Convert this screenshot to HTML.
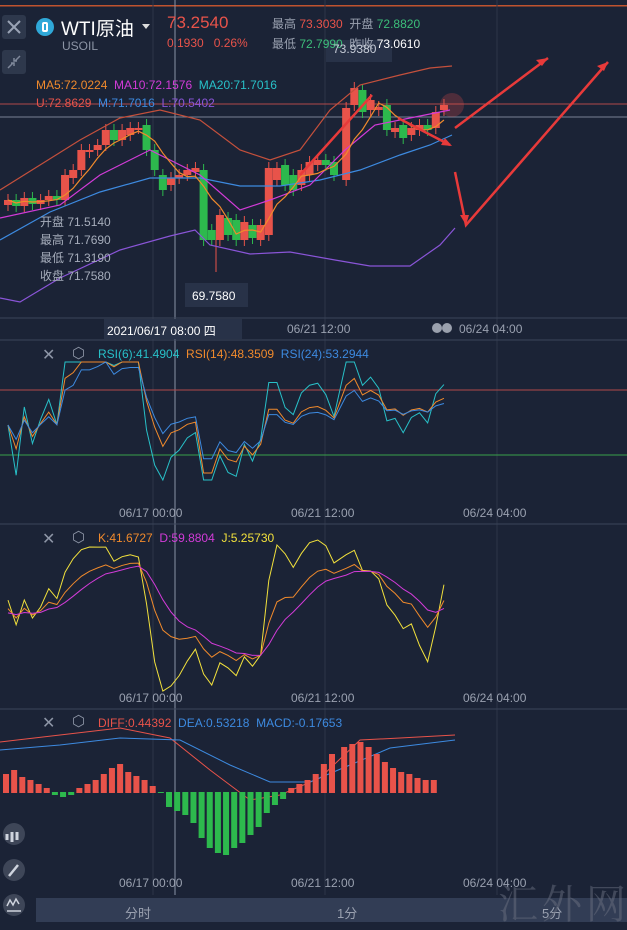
<!DOCTYPE html>
<html><head><meta charset="utf-8"><style>
body{margin:0;width:627px;height:927px;background:#1b2336;overflow:hidden;font-family:"Liberation Sans","Noto Sans CJK SC",sans-serif;position:relative}
.t{position:absolute;white-space:nowrap;font-size:13px}
svg{position:absolute;left:0;top:0}
</style></head><body>
<svg id="s" width="627" height="927" xmlns="http://www.w3.org/2000/svg">
<rect x="0" y="5" width="627" height="1.5" fill="#c0532f"/>
<g stroke="#2c3548" stroke-width="1">
<line x1="153" y1="0" x2="153" y2="895"/><line x1="325" y1="0" x2="325" y2="895"/><line x1="497" y1="0" x2="497" y2="895"/>
</g>
<line x1="175" y1="0" x2="175" y2="895" stroke="#8a93a6" stroke-width="1"/>
<g stroke="#3b4559"><line x1="0" y1="340" x2="627" y2="340"/><line x1="0" y1="524" x2="627" y2="524"/><line x1="0" y1="709" x2="627" y2="709"/><line x1="0" y1="318" x2="627" y2="318"/></g>
<line x1="0" y1="104" x2="627" y2="104" stroke="#b04a4a"/>
<line x1="0" y1="117" x2="627" y2="117" stroke="#7a8294"/>
<line x1="0" y1="390" x2="627" y2="390" stroke="#b04a4a"/>
<line x1="0" y1="455" x2="627" y2="455" stroke="#3aa04a"/>
<rect x="0" y="895" width="627" height="32" fill="#1b2336"/>
<rect x="36" y="898" width="591" height="24" fill="#323d55"/>
<rect x="2" y="15" width="24" height="24" rx="3" fill="#2e384c"/>
<path d="M8 21l12 12M20 21l-12 12" stroke="#9aa3b5" stroke-width="2"/>
<rect x="2" y="50" width="24" height="24" rx="3" fill="#2e384c"/>
<path d="M8 68l5-5M20 56l-5 5M11 63h3v3M17 61h-3v-3" stroke="#7f889a" stroke-width="1.5" fill="none"/>
<circle cx="45" cy="27" r="9" fill="#2fa8d8"/><rect x="42" y="22" width="6" height="10" rx="2" fill="#fff"/><rect x="44" y="24" width="2" height="6" fill="#2fa8d8"/>
<path d="M142 24h8l-4 5z" fill="#ddd"/>
<circle cx="452" cy="105" r="12" fill="#e84a4a" opacity="0.25"/>
<g fill="#3e4658"><circle cx="14" cy="834" r="11"/><circle cx="14" cy="870" r="11"/><circle cx="14" cy="905" r="11"/></g>
<path d="M7 840v-6M12 842v-10M17 840v-8" stroke="#cfd4de" stroke-width="3"/>
<path d="M9 876l9-11" stroke="#cfd4de" stroke-width="2.5"/>
<path d="M7 906l3-6 3 5 3-6 3 5M7 911h14" stroke="#cfd4de" stroke-width="1.5" fill="none"/>
<circle cx="437" cy="328" r="5" fill="#9aa0ad"/><circle cx="447" cy="328" r="5" fill="#9aa0ad"/>
<rect x="185" y="283" width="63" height="24" fill="#283248"/>
<rect x="104" y="319" width="138" height="20" fill="#283248"/>
<rect x="326" y="40" width="66" height="22" fill="#283248"/>
</svg>
<div class="t" style="left:61px;top:14px;font-size:19px;color:#fff">WTI原油</div>
<div class="t" style="left:62px;top:39px;font-size:12px;color:#8d95a6">USOIL</div>
<div class="t" style="left:167px;top:13px;font-size:17px;color:#e8534a">73.2540</div>
<div class="t" style="left:167px;top:36px;font-size:12px;color:#e8534a">0.1930&nbsp;&nbsp;&nbsp;0.26%</div>
<div class="t" style="left:272px;top:15px;font-size:12px;color:#9aa1b0">最高 <span style="color:#e8534a">73.3030</span>&nbsp;&nbsp;开盘 <span style="color:#3cbf7a">72.8820</span></div>
<div class="t" style="left:272px;top:35px;font-size:12px;color:#9aa1b0">最低 <span style="color:#3cbf7a">72.7990</span>&nbsp;&nbsp;昨收 <span style="color:#fff">73.0610</span></div>
<div class="t" style="left:333px;top:42px;font-size:12px;color:#c6ccd7">73.9380</div>
<div class="t" style="left:36px;top:78px;font-size:12px;color:#f08a2c">MA5:72.0224 <span style="color:#d23bd8">&nbsp;MA10:72.1576</span> <span style="color:#28c0c8">&nbsp;MA20:71.7016</span></div>
<div class="t" style="left:36px;top:96px;font-size:12px;color:#e8534a">U:72.8629 <span style="color:#3d8ae0">&nbsp;M:71.7016</span> <span style="color:#8a55d8">&nbsp;L:70.5402</span></div>
<div class="t" style="left:40px;top:213px;font-size:12px;color:#a6adbb;line-height:18px">开盘 71.5140<br>最高 71.7690<br>最低 71.3190<br>收盘 71.7580</div>
<div class="t" style="left:192px;top:289px;font-size:12px;color:#fff">69.7580</div>
<div class="t" style="left:107px;top:322px;font-size:12px;color:#fff">2021/06/17 08:00 四</div>
<div class="t" style="left:287px;top:322px;font-size:12px;color:#9aa1b0">06/21 12:00</div>
<div class="t" style="left:459px;top:322px;font-size:12px;color:#9aa1b0">06/24 04:00</div>
<div class="t" style="left:42px;top:345px;font-size:16px;color:#8d95a6">✕</div>
<div class="t" style="left:72px;top:344px;font-size:15px;color:#8d95a6">⬡</div>
<div class="t" style="left:98px;top:347px;font-size:12px;color:#28c0c8">RSI(6):41.4904 <span style="color:#f08a2c">&nbsp;RSI(14):48.3509</span> <span style="color:#3d8ae0">&nbsp;RSI(24):53.2944</span></div>
<div class="t" style="left:42px;top:529px;font-size:16px;color:#8d95a6">✕</div>
<div class="t" style="left:72px;top:528px;font-size:15px;color:#8d95a6">⬡</div>
<div class="t" style="left:98px;top:531px;font-size:12px;color:#f08a2c">K:41.6727 <span style="color:#d23bd8">&nbsp;D:59.8804</span> <span style="color:#f2e13c">&nbsp;J:5.25730</span></div>
<div class="t" style="left:42px;top:713px;font-size:16px;color:#8d95a6">✕</div>
<div class="t" style="left:72px;top:712px;font-size:15px;color:#8d95a6">⬡</div>
<div class="t" style="left:98px;top:716px;font-size:12px;color:#e8534a">DIFF:0.44392 <span style="color:#3d8ae0">&nbsp;DEA:0.53218</span> <span style="color:#3d8ae0">&nbsp;MACD:-0.17653</span></div>
<div class="t" style="left:119px;top:506px;font-size:12px;color:#9aa1b0">06/17 00:00</div>
<div class="t" style="left:291px;top:506px;font-size:12px;color:#9aa1b0">06/21 12:00</div>
<div class="t" style="left:463px;top:506px;font-size:12px;color:#9aa1b0">06/24 04:00</div>
<div class="t" style="left:119px;top:691px;font-size:12px;color:#9aa1b0">06/17 00:00</div>
<div class="t" style="left:291px;top:691px;font-size:12px;color:#9aa1b0">06/21 12:00</div>
<div class="t" style="left:463px;top:691px;font-size:12px;color:#9aa1b0">06/24 04:00</div>
<div class="t" style="left:119px;top:876px;font-size:12px;color:#9aa1b0">06/17 00:00</div>
<div class="t" style="left:291px;top:876px;font-size:12px;color:#9aa1b0">06/21 12:00</div>
<div class="t" style="left:463px;top:876px;font-size:12px;color:#9aa1b0">06/24 04:00</div>
<div class="t" style="left:125px;top:903px;font-size:13px;color:#9aa1b0">分时</div>
<div class="t" style="left:337px;top:903px;font-size:13px;color:#9aa1b0">1分</div>
<div class="t" style="left:542px;top:903px;font-size:13px;color:#9aa1b0">5分</div>
<div class="t" style="left:498px;top:873px;font-size:40px;color:#6a7080;opacity:.5;letter-spacing:4px;font-family:'Noto Serif CJK SC',serif">汇外网</div>
<script>
var s=document.getElementById('s'),NS='http://www.w3.org/2000/svg';
function el(t,a){var e=document.createElementNS(NS,t);for(var k in a)e.setAttribute(k,a[k]);s.appendChild(e);return e}
function pl(p,c,w){el('polyline',{points:p,fill:'none',stroke:c,'stroke-width':w||1.2})}
var R='#e8534a',G='#2db94d';
var cs=[[205,200],[200,206],[206,198],[198,204],[204,200],[200,196],[196,200],[200,175],[178,170],[170,150],[152,150],[150,145],[145,130],[130,140],[140,130],[135,128],[128,128],[125,150],[150,170],[175,190],[185,178],[178,175],[175,170],[172,168],[170,240],[230,240],[240,215],[218,235],[220,240],[240,222],[225,238],[240,225],[235,168],[180,168],[165,185],[175,190],[185,170],[175,162],[165,160],[160,165],[162,175],[180,108],[105,88],[90,112],[110,100],[110,107],[105,130],[132,128],[125,138],[135,128],[130,125],[125,130],[128,112],[110,105]];
var xs=[];
cs.forEach(function(c,i){var x=8+i*8.15;if(i>40)x+=4;xs.push(x);var o=c[0],cl=c[1],col=cl<o?R:(cl>o?G:R);
el('line',{x1:x,y1:Math.min(o,cl)-6,x2:x,y2:Math.max(o,cl)+6,stroke:col});
el('rect',{x:x-4,y:Math.min(o,cl),width:8,height:Math.max(2,Math.abs(o-cl)),fill:col});});
el('line',{x1:216,y1:240,x2:216,y2:272,stroke:R});
pl('0,190 40,165 80,140 120,118 160,110 200,120 240,150 270,160 300,150 330,110 360,85 400,75 430,68 452,66','#c4503c');
pl('0,240 50,212 100,192 150,178 200,178 240,186 280,186 320,180 360,170 400,155 430,145 452,135','#3d8ae0');
pl('0,298 20,302 60,278 120,250 170,236 195,230 210,245 250,254 270,253 290,252 335,260 370,266 410,266 440,245 455,228','#8a55d8');
pl('0,218 60,205 100,175 150,150 200,175 240,210 270,200 310,185 345,150 375,125 410,118 450,110','#d23bd8');
var m5=[];cs.forEach(function(c,i){var a=0,n=0;for(var j=Math.max(0,i-4);j<=i;j++){a+=cs[j][1];n++}m5.push(xs[i]+','+(a/n))});pl(m5.join(' '),'#f08a2c');
el('path',{d:'M300 175L372 95M398 118L450 145M455 128L548 58M455 172L466 225L608 62',stroke:'#e83a3a','stroke-width':2.5,fill:'none'});
el('path',{d:'M548 58l-12 2 6 6zM608 62l-11 4 7 5zM452 146l-11-1 4-7zM466 225l-6-10 9 0z',fill:'#e83a3a'});
var P=cs.map(function(c){return 300-c[1]});
function rsi(n){var out=[],up=1,dn=1;for(var i=0;i<P.length;i++){var d=i?P[i]-P[i-1]:0;up=(up*(n-1)+Math.max(d,0))/n;dn=(dn*(n-1)+Math.max(-d,0))/n;out.push(100*up/(up+dn))}return out}
function line(arr,f,col){pl(arr.map(function(v,i){return xs[i]+','+f(v)}).join(' '),col,1)}
var fr=function(v){return Math.max(362,Math.min(480,545-v*2.4))};
line(rsi(6),fr,'#28c0c8');line(rsi(14),fr,'#f08a2c');line(rsi(24),fr,'#3d8ae0');
var K=50,D=50,ks=[],ds=[],js=[];
for(var i=0;i<P.length;i++){var hh=-1e9,ll=1e9;for(var j=Math.max(0,i-8);j<=i;j++){hh=Math.max(hh,300-Math.min(cs[j][0],cs[j][1])+6);ll=Math.min(ll,300-Math.max(cs[j][0],cs[j][1])-6)}var rsv=100*(P[i]-ll)/(hh-ll);K=K*2/3+rsv/3;D=D*2/3+K/3;ks.push(K);ds.push(D);js.push(3*K-2*D)}
var fk=function(v){return Math.max(540,Math.min(692,680-v*1.3))};
line(js,fk,'#f2e13c');line(ks,fk,'#f08a2c');line(ds,fk,'#d23bd8');
pl('0,742 60,735 120,728 170,738 210,770 250,800 280,795 320,778 360,740 400,738 455,735','#e8534a',1);
pl('0,750 60,745 120,738 180,740 230,765 270,782 310,782 350,765 390,748 455,740','#3d8ae0',1);
var h=[18,22,15,12,8,4,-2,-4,-2,4,8,12,18,24,28,20,16,12,6,0,-14,-18,-22,-30,-45,-55,-60,-62,-55,-50,-42,-34,-20,-12,-6,4,8,12,18,28,38,45,48,50,45,38,30,24,20,18,14,12,12];
h.forEach(function(v,i){var x=3+i*8.15;if(i>40)x+=4;el('rect',{x:x,y:v>0?792-v:792,width:6,height:Math.abs(v)+1,fill:v>0?R:G})});
</script>
</body></html>
